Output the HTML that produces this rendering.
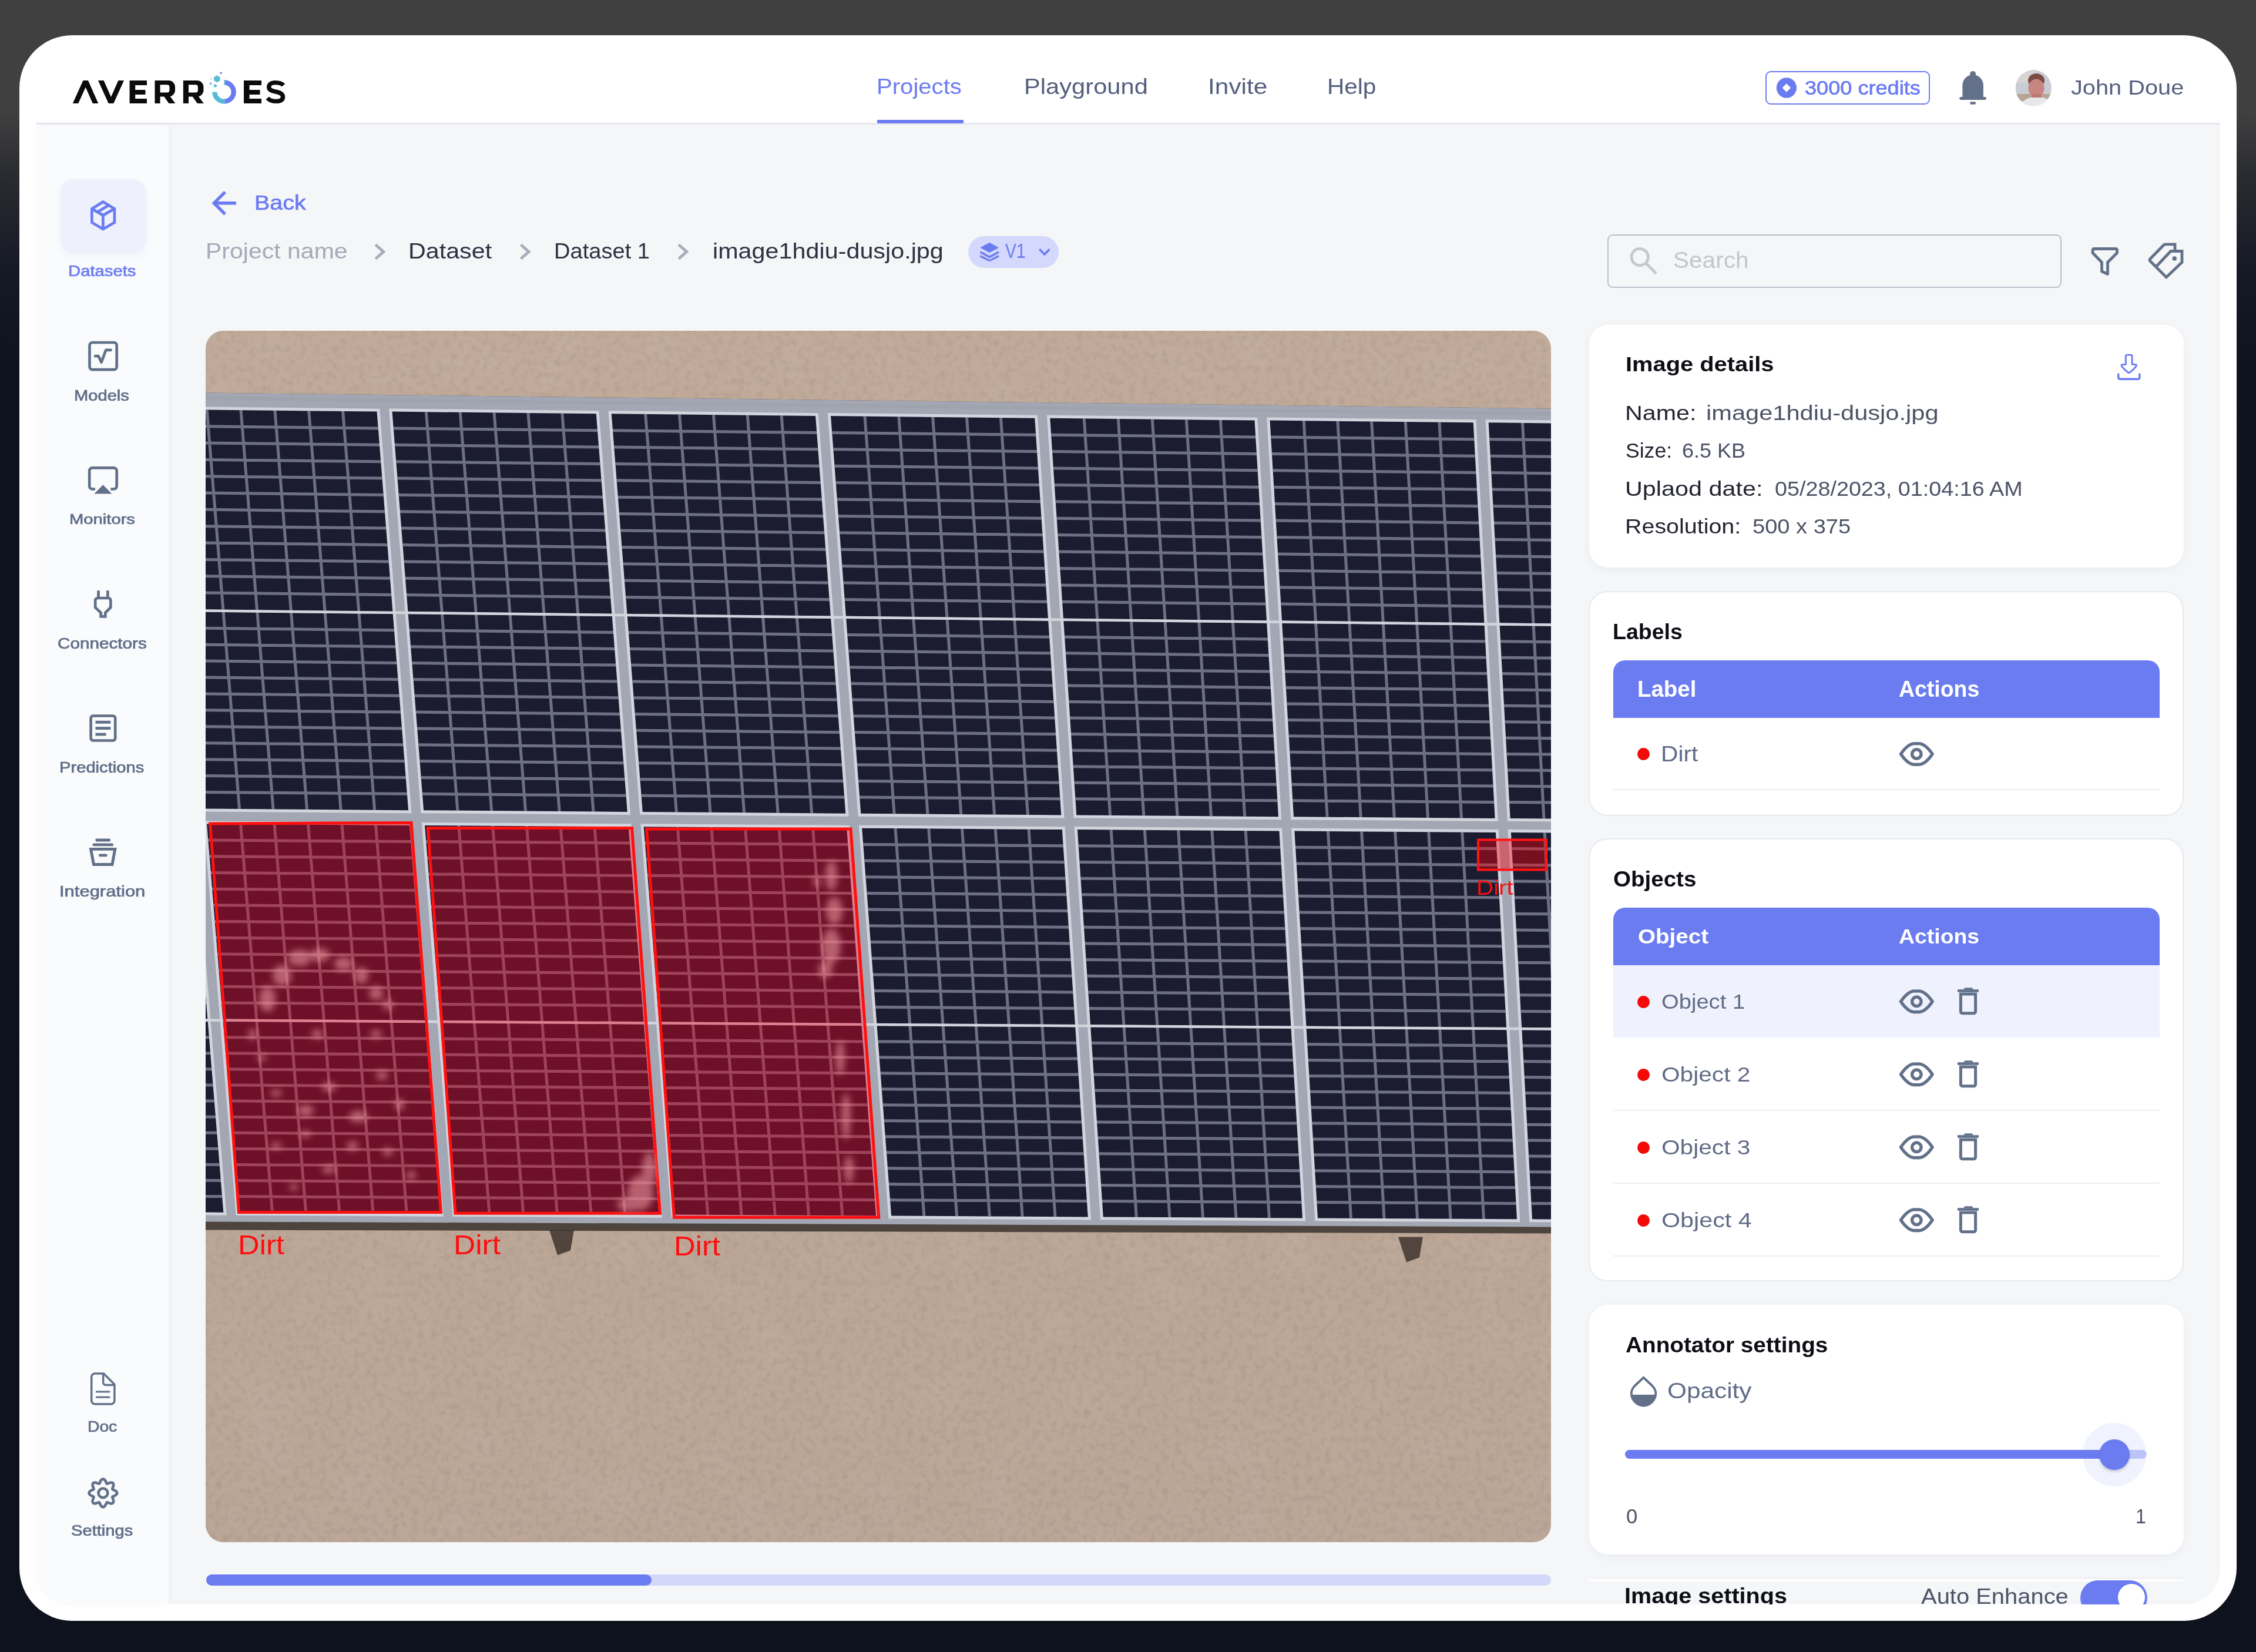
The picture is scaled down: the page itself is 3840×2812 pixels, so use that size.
<!DOCTYPE html><html><head><meta charset="utf-8"><style>
*{box-sizing:border-box;margin:0;padding:0}
html,body{width:3840px;height:2812px;overflow:hidden}
body{position:relative;font-family:"Liberation Sans",sans-serif;
background:linear-gradient(180deg,#404040 0px,#404040 190px,#2a2b30 300px,#151925 460px,#0f131e 620px,#0e121d 2812px)}
.a{position:absolute}
.t{position:absolute;white-space:nowrap;line-height:1;transform-origin:0 0}
svg{position:absolute;overflow:visible}
</style></head><body>

<div class="a" style="left:33px;top:60px;width:3774px;height:2699px;background:#fff;border-radius:90px"></div>
<div class="a" style="left:61px;top:209px;width:3718px;height:3px;background:#e6e8ed"></div>
<div class="a" style="left:61px;top:212px;width:3718px;height:2519px;background:#f5f6f8;border-radius:0 0 60px 60px"></div>
<div class="a" style="left:61px;top:212px;width:226px;height:2519px;background:#fafbfc;border-radius:0 0 0 60px;box-shadow:2px 0 8px rgba(30,40,80,0.04)"></div>
<svg style="left:0;top:0" width="3840" height="300" viewBox="0 0 3840 300">
<defs><linearGradient id="lg" x1="0" y1="0" x2="1" y2="0">
<stop offset="0" stop-color="#58bcd9"/><stop offset="0.48" stop-color="#5cb8dc"/><stop offset="0.62" stop-color="#6a80ee"/><stop offset="1" stop-color="#6c79f1"/></linearGradient></defs>
<g fill="#0b0b0e">
<polygon points="123.8,176 141.5,137 150,137 167.3,176 157.8,176 145.7,148.5 133.3,176"/>
<polygon points="167,137 176.6,137 189,165 201.4,137 211,137 193.3,176 184.7,176"/>
<path d="M220.6 137H250V145H230.2V153H247.5V161H230.2V168H250V176H220.6Z"/>
<path d="M263.5 137 H287 A11 11 0 0 1 298 148 V153.4 A11 11 0 0 1 287 164.4 H272.6 V176 H263.5 Z M272.6 144.2 V157.4 H284.5 A4 4 0 0 0 288.5 153.4 V148.2 A4 4 0 0 0 284.5 144.2 Z" fill-rule="evenodd"/>
<path d="M279 164 H289.5 L298.4 176 H287.5 Z"/>
<path d="M311.9 137 H335.4 A11 11 0 0 1 346.4 148 V153.4 A11 11 0 0 1 335.4 164.4 H321 V176 H311.9 Z M321 144.2 V157.4 H332.9 A4 4 0 0 0 336.9 153.4 V148.2 A4 4 0 0 0 332.9 144.2 Z" fill-rule="evenodd"/>
<path d="M327.4 164 H337.9 L346.8 176 H335.9 Z"/>
<path d="M415 137H445V145H424.6V153H442.5V161H424.6V168H445V176H415Z"/>
<path d="M482.3 145.2 C479.5 141.5 475 140.6 468.5 140.6 C461.5 140.6 457.7 143.6 457.7 148.3 C457.7 153.3 462.5 154.8 469.5 156.2 C477.5 157.7 481.5 160.2 481.5 165 C481.5 170 477 172.4 469.5 172.4 C463.5 172.4 458.5 170.5 455.3 166.8" fill="none" stroke="#0b0b0e" stroke-width="7.4"/>
</g>
<path d="M381.5 140.3 A16.2 16.2 0 1 1 365.3 156.5" fill="none" stroke="url(#lg)" stroke-width="8.2"/>
<polygon points="369.3,128.2 374.5,131.2 374.5,137.2 369.3,140.2 364.1,137.2 364.1,131.2" fill="#5bbcd8"/>
<circle cx="366.4" cy="146" r="2.6" fill="#5bbcd8"/>
<circle cx="358.6" cy="142.3" r="2" fill="#9aa6ee"/>
<circle cx="376.2" cy="124.2" r="1.7" fill="#6b7cf1"/>
<circle cx="359" cy="134.5" r="1.2" fill="#9ad6ea"/>
</svg>
<div class="t" style="left:1492.47px;top:130px;font-size:36.5px;color:#6b7cf1;font-weight:400;transform:scaleX(1.0987);">Projects</div>
<div class="t" style="left:1742.72px;top:130px;font-size:36.5px;color:#555f7e;font-weight:400;transform:scaleX(1.1423);">Playground</div>
<div class="t" style="left:2055.53px;top:130px;font-size:36.5px;color:#555f7e;font-weight:400;transform:scaleX(1.1624);">Invite</div>
<div class="t" style="left:2258.77px;top:130px;font-size:36.5px;color:#555f7e;font-weight:400;transform:scaleX(1.1112);">Help</div>
<div class="a" style="left:1493px;top:203.5px;width:147px;height:6px;background:#6b7cf1;border-radius:1px"></div>
<div class="a" style="left:3005px;top:120.5px;width:280px;height:57px;border:2.5px solid #6b7cf1;border-radius:9px"></div>
<svg style="left:0;top:0" width="10" height="10" viewBox="0 0 10 10">
<circle cx="3040.9" cy="149.5" r="17.2" fill="#6b7cf1"/>
<polygon points="3033.7,149.5 3040.9,142.3 3048.1,149.5 3040.9,156.7" fill="#fff"/>
</svg>
<div class="t" style="left:3072.31px;top:134px;font-size:32.5px;color:#6b7cf1;font-weight:400;transform:scaleX(1.1115);-webkit-text-stroke:0.7px #6b7cf1;">3000 credits</div>
<svg style="left:0;top:0" width="10" height="10">
<circle cx="3358.1" cy="126" r="5" fill="#627189"/>
<path d="M3340.4 165 V145 A17.75 17.75 0 0 1 3375.9 145 V165 Z" fill="#627189"/>
<rect x="3335.2" y="165" width="45.8" height="4.9" rx="2.45" fill="#627189"/>
<rect x="3353.1" y="173.2" width="10" height="4.6" rx="2.3" fill="#627189"/>
</svg>
<svg style="left:0;top:0" width="10" height="10">
<defs><clipPath id="av"><circle cx="3461.3" cy="149.9" r="30.6"/></clipPath></defs>
<g clip-path="url(#av)">
<rect x="3430" y="119" width="63" height="63" fill="#c8ccd3"/>
<rect x="3430" y="119" width="36" height="22" fill="#d9d4d3"/>
<rect x="3430" y="160" width="63" height="12" fill="#b7a493"/>
<ellipse cx="3466" cy="137" rx="14" ry="12" fill="#7b4c44"/>
<ellipse cx="3466" cy="150" rx="13.5" ry="15.5" fill="#c98580"/>
<path d="M3459 160 L3474 160 L3476 171 L3457 171Z" fill="#bd7772"/>
<path d="M3434 188 Q3440 170 3456 166 L3477 166 Q3494 170 3499 188Z" fill="#e8e7ed"/>
</g></svg>
<div class="t" style="left:3525.11px;top:132px;font-size:35.5px;color:#555f7e;font-weight:400;transform:scaleX(1.1196);">John Doue</div>
<div class="a" style="left:102.5px;top:304.5px;width:145px;height:126px;background:#eef0fd;border-radius:22px;box-shadow:0 6px 14px rgba(107,124,241,0.06)"></div>
<svg style="left:0;top:0" width="10" height="10"><g fill="none" stroke="#6b7cf1" stroke-width="4.7" stroke-linejoin="round" stroke-linecap="round">
<polygon points="175.4,343.5 194.9,355.4 194.9,378.7 175.4,390 156.4,378.7 156.4,355.4"/>
<polyline points="156.4,355.4 175.4,366.4 194.9,355.4"/>
<line x1="175.4" y1="366.4" x2="175.4" y2="390"/>
<line x1="165.8" y1="361" x2="185.2" y2="349.2"/>
</g></svg>
<div class="t" style="left:116.21px;top:449px;font-size:25.25px;color:#6b7cf1;font-weight:400;transform:scaleX(1.1589);-webkit-text-stroke:0.7px #6b7cf1;">Datasets</div>
<svg style="left:0;top:0" width="10" height="10"><g fill="none" stroke="#627189" stroke-width="4.7" stroke-linejoin="round" stroke-linecap="round">
<rect x="152.5" y="583" width="46.2" height="46.2" rx="5"/>
<polyline points="162,606.2 167.5,606.2 172.6,616.6 180.3,595.8 188.7,595.8"/>
</g></svg>
<div class="t" style="left:126.13px;top:661px;font-size:25.25px;color:#5f6d88;font-weight:400;transform:scaleX(1.1537);-webkit-text-stroke:0.7px #5f6d88;">Models</div>
<svg style="left:0;top:0" width="10" height="10">
<path d="M162 832.5 H157.2 A5 5 0 0 1 152.2 827.5 V801.4 A5 5 0 0 1 157.2 796.4 H193.7 A5 5 0 0 1 198.7 801.4 V827.5 A5 5 0 0 1 193.7 832.5 H188.3" fill="none" stroke="#627189" stroke-width="4.7"/>
<polygon points="160.3,840.5 175.4,825.3 190.4,840.5" fill="#627189"/>
</svg>
<div class="t" style="left:118.40px;top:872px;font-size:24.25px;color:#5f6d88;font-weight:400;transform:scaleX(1.2039);-webkit-text-stroke:0.7px #5f6d88;">Monitors</div>
<svg style="left:0;top:0" width="10" height="10">
<rect x="165.2" y="1005.2" width="4.7" height="12" fill="#627189"/>
<rect x="181" y="1005.2" width="4.7" height="12" fill="#627189"/>
<path d="M162.2 1034 V1022 A4 4 0 0 1 166.2 1018 H184.3 A4 4 0 0 1 188.3 1022 V1034 L179.3 1043 V1049.4 H171.7 V1043 Z" fill="none" stroke="#627189" stroke-width="4.7" stroke-linejoin="miter"/>
</svg>
<div class="t" style="left:97.90px;top:1083px;font-size:25.75px;color:#5f6d88;font-weight:400;transform:scaleX(1.1530);-webkit-text-stroke:0.7px #5f6d88;">Connectors</div>
<svg style="left:0;top:0" width="10" height="10"><g fill="none" stroke="#627189">
<rect x="154.6" y="1218.5" width="41.6" height="42" rx="4" stroke-width="4.7"/>
<line x1="162.5" y1="1229.3" x2="188.3" y2="1229.3" stroke-width="4.9"/>
<line x1="162.5" y1="1239.6" x2="188.3" y2="1239.6" stroke-width="4.9"/>
<line x1="162.5" y1="1250" x2="180.5" y2="1250" stroke-width="4.9"/>
</g></svg>
<div class="t" style="left:101.12px;top:1294px;font-size:25.75px;color:#5f6d88;font-weight:400;transform:scaleX(1.1328);-webkit-text-stroke:0.7px #5f6d88;">Predictions</div>
<svg style="left:0;top:0" width="10" height="10"><g fill="none" stroke="#627189" stroke-width="4.9" stroke-linecap="round">
<line x1="164.7" y1="1430" x2="185.8" y2="1430"/>
<line x1="159.9" y1="1437.9" x2="190.7" y2="1437.9"/>
<polygon points="154.6,1445.4 195.8,1445.4 191,1471.5 159.5,1471.5" stroke-linecap="butt" stroke-linejoin="miter"/>
<line x1="170.3" y1="1455.9" x2="180.3" y2="1455.9"/>
</g></svg>
<div class="t" style="left:101.34px;top:1505px;font-size:25.75px;color:#5f6d88;font-weight:400;transform:scaleX(1.2025);-webkit-text-stroke:0.7px #5f6d88;">Integration</div>
<svg style="left:0;top:0" width="10" height="10"><g fill="none" stroke="#627189" stroke-width="3.5" stroke-linejoin="round" stroke-linecap="round">
<path d="M176.5 2338.1 H161.7 A6 6 0 0 0 155.7 2344.1 V2384 A6 6 0 0 0 161.7 2390 H188.9 A6 6 0 0 0 194.9 2384 V2356.5 Z"/>
<path d="M175.6 2338.6 V2353 A4.5 4.5 0 0 0 180.1 2357.5 H194.5"/>
<line x1="164.3" y1="2369" x2="186" y2="2369" stroke-width="3"/>
<line x1="164.3" y1="2378.2" x2="186" y2="2378.2" stroke-width="3"/>
</g></svg>
<div class="t" style="left:148.98px;top:2416px;font-size:25.25px;color:#5f6d88;font-weight:400;transform:scaleX(1.1181);-webkit-text-stroke:0.7px #5f6d88;">Doc</div>
<svg style="left:0;top:0" width="10" height="10"><g fill="none" stroke="#627189" stroke-width="4.6">
<polygon points="175.40,2517.60 175.87,2517.64 176.33,2517.75 176.78,2517.93 177.23,2518.18 177.66,2518.50 178.07,2518.87 178.46,2519.30 178.83,2519.77 179.17,2520.28 179.50,2520.81 179.80,2521.37 180.07,2521.93 180.33,2522.50 180.58,2523.05 180.80,2523.58 181.03,2524.08 181.25,2524.54 181.47,2524.94 181.71,2525.28 181.98,2525.51 182.34,2525.54 182.74,2525.47 183.19,2525.35 183.67,2525.18 184.18,2524.98 184.72,2524.77 185.28,2524.55 185.86,2524.33 186.46,2524.13 187.06,2523.95 187.67,2523.80 188.27,2523.68 188.87,2523.61 189.45,2523.58 190.00,2523.61 190.53,2523.69 191.02,2523.83 191.47,2524.02 191.87,2524.27 192.23,2524.57 192.53,2524.93 192.78,2525.33 192.97,2525.78 193.11,2526.27 193.19,2526.80 193.22,2527.35 193.19,2527.93 193.12,2528.53 193.00,2529.13 192.85,2529.74 192.67,2530.34 192.47,2530.94 192.25,2531.52 192.03,2532.08 191.82,2532.62 191.62,2533.13 191.45,2533.61 191.33,2534.06 191.26,2534.46 191.29,2534.82 191.52,2535.09 191.86,2535.33 192.26,2535.55 192.72,2535.77 193.22,2536.00 193.75,2536.22 194.30,2536.47 194.87,2536.73 195.43,2537.00 195.99,2537.30 196.52,2537.63 197.03,2537.97 197.50,2538.34 197.93,2538.73 198.30,2539.14 198.62,2539.57 198.87,2540.02 199.05,2540.47 199.16,2540.93 199.20,2541.40 199.16,2541.87 199.05,2542.33 198.87,2542.78 198.62,2543.23 198.30,2543.66 197.93,2544.07 197.50,2544.46 197.03,2544.83 196.52,2545.17 195.99,2545.50 195.43,2545.80 194.87,2546.07 194.30,2546.33 193.75,2546.58 193.22,2546.80 192.72,2547.03 192.26,2547.25 191.86,2547.47 191.52,2547.71 191.29,2547.98 191.26,2548.34 191.33,2548.74 191.45,2549.19 191.62,2549.67 191.82,2550.18 192.03,2550.72 192.25,2551.28 192.47,2551.86 192.67,2552.46 192.85,2553.06 193.00,2553.67 193.12,2554.27 193.19,2554.87 193.22,2555.45 193.19,2556.00 193.11,2556.53 192.97,2557.02 192.78,2557.47 192.53,2557.87 192.23,2558.23 191.87,2558.53 191.47,2558.78 191.02,2558.97 190.53,2559.11 190.00,2559.19 189.45,2559.22 188.87,2559.19 188.27,2559.12 187.67,2559.00 187.06,2558.85 186.46,2558.67 185.86,2558.47 185.28,2558.25 184.72,2558.03 184.18,2557.82 183.67,2557.62 183.19,2557.45 182.74,2557.33 182.34,2557.26 181.98,2557.29 181.71,2557.52 181.47,2557.86 181.25,2558.26 181.03,2558.72 180.80,2559.22 180.58,2559.75 180.33,2560.30 180.07,2560.87 179.80,2561.43 179.50,2561.99 179.17,2562.52 178.83,2563.03 178.46,2563.50 178.07,2563.93 177.66,2564.30 177.23,2564.62 176.78,2564.87 176.33,2565.05 175.87,2565.16 175.40,2565.20 174.93,2565.16 174.47,2565.05 174.02,2564.87 173.57,2564.62 173.14,2564.30 172.73,2563.93 172.34,2563.50 171.97,2563.03 171.63,2562.52 171.30,2561.99 171.00,2561.43 170.73,2560.87 170.47,2560.30 170.22,2559.75 170.00,2559.22 169.77,2558.72 169.55,2558.26 169.33,2557.86 169.09,2557.52 168.82,2557.29 168.46,2557.26 168.06,2557.33 167.61,2557.45 167.13,2557.62 166.62,2557.82 166.08,2558.03 165.52,2558.25 164.94,2558.47 164.34,2558.67 163.74,2558.85 163.13,2559.00 162.53,2559.12 161.93,2559.19 161.35,2559.22 160.80,2559.19 160.27,2559.11 159.78,2558.97 159.33,2558.78 158.93,2558.53 158.57,2558.23 158.27,2557.87 158.02,2557.47 157.83,2557.02 157.69,2556.53 157.61,2556.00 157.58,2555.45 157.61,2554.87 157.68,2554.27 157.80,2553.67 157.95,2553.06 158.13,2552.46 158.33,2551.86 158.55,2551.28 158.77,2550.72 158.98,2550.18 159.18,2549.67 159.35,2549.19 159.47,2548.74 159.54,2548.34 159.51,2547.98 159.28,2547.71 158.94,2547.47 158.54,2547.25 158.08,2547.03 157.58,2546.80 157.05,2546.58 156.50,2546.33 155.93,2546.07 155.37,2545.80 154.81,2545.50 154.28,2545.17 153.77,2544.83 153.30,2544.46 152.87,2544.07 152.50,2543.66 152.18,2543.23 151.93,2542.78 151.75,2542.33 151.64,2541.87 151.60,2541.40 151.64,2540.93 151.75,2540.47 151.93,2540.02 152.18,2539.57 152.50,2539.14 152.87,2538.73 153.30,2538.34 153.77,2537.97 154.28,2537.63 154.81,2537.30 155.37,2537.00 155.93,2536.73 156.50,2536.47 157.05,2536.22 157.58,2536.00 158.08,2535.77 158.54,2535.55 158.94,2535.33 159.28,2535.09 159.51,2534.82 159.54,2534.46 159.47,2534.06 159.35,2533.61 159.18,2533.13 158.98,2532.62 158.77,2532.08 158.55,2531.52 158.33,2530.94 158.13,2530.34 157.95,2529.74 157.80,2529.13 157.68,2528.53 157.61,2527.93 157.58,2527.35 157.61,2526.80 157.69,2526.27 157.83,2525.78 158.02,2525.33 158.27,2524.93 158.57,2524.57 158.93,2524.27 159.33,2524.02 159.78,2523.83 160.27,2523.69 160.80,2523.61 161.35,2523.58 161.93,2523.61 162.53,2523.68 163.13,2523.80 163.74,2523.95 164.34,2524.13 164.94,2524.33 165.52,2524.55 166.08,2524.77 166.62,2524.98 167.13,2525.18 167.61,2525.35 168.06,2525.47 168.46,2525.54 168.82,2525.51 169.09,2525.28 169.33,2524.94 169.55,2524.54 169.77,2524.08 170.00,2523.58 170.22,2523.05 170.47,2522.50 170.73,2521.93 171.00,2521.37 171.30,2520.81 171.63,2520.28 171.97,2519.77 172.34,2519.30 172.73,2518.87 173.14,2518.50 173.57,2518.18 174.02,2517.93 174.47,2517.75 174.93,2517.64 175.40,2517.60" stroke-linejoin="round"/>
<circle cx="175.4" cy="2541.4" r="7.9"/>
</g></svg>
<div class="t" style="left:120.85px;top:2593px;font-size:25.0px;color:#5f6d88;font-weight:400;transform:scaleX(1.1660);-webkit-text-stroke:0.7px #5f6d88;">Settings</div>
<svg style="left:0;top:0" width="10" height="10"><g fill="none" stroke="#6b7cf1" stroke-width="5.4" stroke-linecap="butt" stroke-linejoin="miter">
<polyline points="383.2,326.8 364.3,345.7 383.2,364.6"/>
<line x1="364.3" y1="345.7" x2="402" y2="345.7"/>
</g></svg>
<div class="t" style="left:433.48px;top:328px;font-size:35.5px;color:#6b7cf1;font-weight:400;transform:scaleX(1.1111);-webkit-text-stroke:0.7px #6b7cf1;">Back</div>
<div class="t" style="left:349.50px;top:410px;font-size:36.25px;color:#a6a9b8;font-weight:400;transform:scaleX(1.1315);">Project name</div>
<svg style="left:0;top:0" width="10" height="10"><polyline points="639.2,416.5 652.7,428.5 639.2,440.5" fill="none" stroke="#a9acbb" stroke-width="5"/></svg>
<svg style="left:0;top:0" width="10" height="10"><polyline points="886.5,416.5 900,428.5 886.5,440.5" fill="none" stroke="#a9acbb" stroke-width="5"/></svg>
<svg style="left:0;top:0" width="10" height="10"><polyline points="1155.2,416.5 1168.7,428.5 1155.2,440.5" fill="none" stroke="#a9acbb" stroke-width="5"/></svg>
<div class="t" style="left:695.29px;top:410px;font-size:36.25px;color:#2e3142;font-weight:400;transform:scaleX(1.1377);">Dataset</div>
<div class="t" style="left:942.53px;top:410px;font-size:36.25px;color:#2e3142;font-weight:400;transform:scaleX(1.0504);">Dataset 1</div>
<div class="t" style="left:1213.23px;top:410px;font-size:36.25px;color:#2e3142;font-weight:400;transform:scaleX(1.1399);">image1hdiu-dusjo.jpg</div>
<div class="a" style="left:1648px;top:401.5px;width:154px;height:54px;background:#d3d8fc;border-radius:27px"></div>
<svg style="left:0;top:0" width="10" height="10"><g fill="#6b7cf1">
<path d="M1684.3 413 L1698.5 420.5 Q1700.5 421.5 1698.5 422.6 L1684.3 430 L1670 422.6 Q1668 421.5 1670 420.5 Z"/>
<path d="M1669.5 427.5 L1684.3 435.5 L1699 427.5 Q1700.5 428.3 1700.5 429.5 Q1700.5 430.7 1699 431.5 L1684.3 439.5 L1669.5 431.5 Q1668 430.7 1668 429.5 Q1668 428.3 1669.5 427.5Z"/>
<path d="M1669.5 434.3 L1684.3 442 L1699 434.3 Q1700.5 435 1700.5 436.3 Q1700.5 437.5 1699 438.3 L1686 444.5 Q1684.3 445.3 1682.6 444.5 L1669.5 438.3 Q1668 437.5 1668 436.3 Q1668 435 1669.5 434.3Z"/>
</g>
<polyline points="1769.4,424.3 1778,432.9 1786.3,424.3" fill="none" stroke="#6b7cf1" stroke-width="3.6"/>
</svg>
<div class="t" style="left:1711.00px;top:410px;font-size:34.5px;color:#6b7cf1;font-weight:400;transform:scaleX(0.8219);">V1</div>
<div class="a" style="left:2736px;top:398.5px;width:773px;height:91px;border:2.5px solid #b9bfc9;border-radius:9px"></div>
<svg style="left:0;top:0" width="10" height="10"><g fill="none" stroke="#c4c9cf" stroke-width="4.9">
<circle cx="2791.2" cy="437.6" r="14.2"/>
<line x1="2801.5" y1="448" x2="2819.1" y2="465.5"/>
</g></svg>
<div class="t" style="left:2848.38px;top:424px;font-size:38.0px;color:#c2c6cc;font-weight:400;transform:scaleX(1.0676);">Search</div>
<svg style="left:0;top:0" width="10" height="10"><g fill="none" stroke="#627189" stroke-width="4.8" stroke-linejoin="round">
<path d="M3564 423.5 H3601.5 A2 2 0 0 1 3603.5 425.5 V430.5 L3587.5 446.5 V466.5 L3577.5 462 V446.5 L3562 430.5 V425.5 A2 2 0 0 1 3564 423.5Z"/>
<path d="M3694.9 427.5 H3714 V446.5 L3687.3 472 L3660 444.5 Q3658 442.5 3660 440.5 L3683 417 Q3684 415.9 3686 415.9 H3702 V427.5" stroke-linejoin="miter"/>
<path d="M3669.7 454.1 L3694.9 427.5 H3700" stroke-linecap="round"/>
</g>
<circle cx="3701.2" cy="440.1" r="3.8" fill="#627189"/>
</svg>
<div class="a" style="left:2705px;top:552.5px;width:1011.5px;height:413px;background:#fff;border-radius:32px;box-shadow:0 4px 14px rgba(40,50,90,0.05)"></div>
<div class="t" style="left:2766.74px;top:602px;font-size:35.0px;color:#0d0e14;font-weight:700;transform:scaleX(1.1386);">Image details</div>
<svg style="left:0;top:0" width="10" height="10"><g fill="none" stroke="#6b7cf1" stroke-linejoin="round" stroke-linecap="round">
<path d="M3620.5 604.1 H3627 Q3629.1 604.1 3629.1 606.2 V620.4 H3634.5 Q3637.6 620.6 3636 623.3 Q3631 630 3625.5 633.8 Q3623.7 635 3622 633.8 Q3616.5 630 3611.5 623.3 Q3610 620.6 3613 620.4 H3618.3 V606.2 Q3618.3 604.1 3620.5 604.1Z" stroke-width="2.9"/>
<path d="M3605.7 637 V642 Q3605.7 645.3 3609 645.3 H3638.6 Q3641.9 645.3 3641.9 642 V637" stroke-width="3.5"/>
</g></svg>
<div class="t" style="left:2765.78px;top:686px;font-size:35.75px;color:#22242f;font-weight:400;transform:scaleX(1.1535);">Name:</div>
<div class="t" style="left:2904.09px;top:686px;font-size:35.75px;color:#4d5367;font-weight:400;transform:scaleX(1.1639);">image1hdiu-dusjo.jpg</div>
<div class="t" style="left:2767.03px;top:750px;font-size:35.75px;color:#22242f;font-weight:400;transform:scaleX(0.9948);">Size:</div>
<div class="t" style="left:2863.06px;top:750px;font-size:35.75px;color:#4d5367;font-weight:400;transform:scaleX(1.0050);">6.5 KB</div>
<div class="t" style="left:2765.77px;top:815px;font-size:35.75px;color:#22242f;font-weight:400;transform:scaleX(1.1561);">Uplaod date:</div>
<div class="t" style="left:3020.95px;top:815px;font-size:35.75px;color:#4d5367;font-weight:400;transform:scaleX(1.0554);">05/28/2023, 01:04:16 AM</div>
<div class="t" style="left:2765.91px;top:879px;font-size:35.75px;color:#22242f;font-weight:400;transform:scaleX(1.1027);">Resolution:</div>
<div class="t" style="left:2982.94px;top:879px;font-size:35.75px;color:#4d5367;font-weight:400;transform:scaleX(1.0645);">500 x 375</div>
<div class="a" style="left:2704px;top:1005.5px;width:1013px;height:383px;background:#fff;border:2px solid #e7e9ee;border-radius:32px"></div>
<div class="t" style="left:2745.00px;top:1057px;font-size:37.5px;color:#0d0e14;font-weight:700;transform:scaleX(0.9995);">Labels</div>
<div class="a" style="left:2746px;top:1124px;width:930px;height:97.5px;background:#6b7cf1;border-radius:20px 20px 0 0"></div>
<div class="t" style="left:2786.70px;top:1154px;font-size:38.25px;color:#ffffff;font-weight:700;transform:scaleX(1.0041);">Label</div>
<div class="t" style="left:3232.03px;top:1154px;font-size:38.25px;color:#ffffff;font-weight:700;transform:scaleX(0.9782);">Actions</div>
<div class="a" style="left:2786.5px;top:1273px;width:21px;height:21px;border-radius:50%;background:#f50a0a"></div>
<div class="t" style="left:2826.78px;top:1266px;font-size:36.25px;color:#606c86;font-weight:400;transform:scaleX(1.1230);">Dirt</div>
<svg style="left:0;top:0" width="10" height="10"><g fill="none" stroke="#627189" stroke-width="5.3">
<path d="M3235.4 1283.5 Q3249.3 1263.0 3262.3 1265.9 Q3275.3 1263.0 3289.2000000000003 1283.5 Q3275.3 1304.0 3262.3 1301.1 Q3249.3 1304.0 3235.4 1283.5Z" stroke-linejoin="round"/>
<circle cx="3262.3" cy="1283.5" r="7.8" stroke-width="5.4"/>
</g></svg>
<div class="a" style="left:2746px;top:1343px;width:930px;height:2px;background:#eceef2"></div>
<div class="a" style="left:2704px;top:1426.5px;width:1013px;height:754px;background:#fff;border:2px solid #e7e9ee;border-radius:32px"></div>
<div class="t" style="left:2745.97px;top:1478px;font-size:37.5px;color:#0d0e14;font-weight:700;transform:scaleX(1.0279);">Objects</div>
<div class="a" style="left:2746px;top:1545px;width:930px;height:97.6px;background:#6b7cf1;border-radius:20px 20px 0 0"></div>
<div class="t" style="left:2787.62px;top:1577px;font-size:35.75px;color:#ffffff;font-weight:700;transform:scaleX(1.0790);">Object</div>
<div class="t" style="left:3231.96px;top:1577px;font-size:35.75px;color:#ffffff;font-weight:700;transform:scaleX(1.0464);">Actions</div>
<div class="a" style="left:2746px;top:1642.6px;width:930px;height:123.4px;background:#eff1fd"></div>
<div class="a" style="left:2786.5px;top:1694.9px;width:21px;height:21px;border-radius:50%;background:#f50a0a"></div>
<div class="t" style="left:2828.12px;top:1688px;font-size:34.75px;color:#606c86;font-weight:400;transform:scaleX(1.0982);">Object 1</div>
<svg style="left:0;top:0" width="10" height="10"><g fill="none" stroke="#627189" stroke-width="5.3">
<path d="M3235.4 1704.8000000000002 Q3249.3 1684.3000000000002 3262.3 1687.2000000000003 Q3275.3 1684.3000000000002 3289.2000000000003 1704.8000000000002 Q3275.3 1725.3000000000002 3262.3 1722.4 Q3249.3 1725.3000000000002 3235.4 1704.8000000000002Z" stroke-linejoin="round"/>
<circle cx="3262.3" cy="1704.8000000000002" r="7.8" stroke-width="5.4"/>
</g></svg>
<svg style="left:0;top:0" width="10" height="10">
<rect x="3332" y="1684.2000000000003" width="35.9" height="4.6" fill="#627189"/>
<path d="M3342 1684.3000000000002 L3344.5 1681.3000000000002 H3356.5 L3359 1684.3000000000002Z" fill="#627189"/>
<path d="M3337.4 1692.0000000000002 V1721.8000000000002 A3 3 0 0 0 3340.4 1724.8000000000002 H3359.6 A3 3 0 0 0 3362.6 1721.8000000000002 V1692.0000000000002Z" fill="none" stroke="#627189" stroke-width="5"/>
</svg>
<div class="a" style="left:2786.5px;top:1818.9px;width:21px;height:21px;border-radius:50%;background:#f50a0a"></div>
<div class="t" style="left:2827.99px;top:1812px;font-size:34.75px;color:#606c86;font-weight:400;transform:scaleX(1.1695);">Object 2</div>
<svg style="left:0;top:0" width="10" height="10"><g fill="none" stroke="#627189" stroke-width="5.3">
<path d="M3235.4 1828.8000000000002 Q3249.3 1808.3000000000002 3262.3 1811.2000000000003 Q3275.3 1808.3000000000002 3289.2000000000003 1828.8000000000002 Q3275.3 1849.3000000000002 3262.3 1846.4 Q3249.3 1849.3000000000002 3235.4 1828.8000000000002Z" stroke-linejoin="round"/>
<circle cx="3262.3" cy="1828.8000000000002" r="7.8" stroke-width="5.4"/>
</g></svg>
<svg style="left:0;top:0" width="10" height="10">
<rect x="3332" y="1808.2000000000003" width="35.9" height="4.6" fill="#627189"/>
<path d="M3342 1808.3000000000002 L3344.5 1805.3000000000002 H3356.5 L3359 1808.3000000000002Z" fill="#627189"/>
<path d="M3337.4 1816.0000000000002 V1845.8000000000002 A3 3 0 0 0 3340.4 1848.8000000000002 H3359.6 A3 3 0 0 0 3362.6 1845.8000000000002 V1816.0000000000002Z" fill="none" stroke="#627189" stroke-width="5"/>
</svg>
<div class="a" style="left:2746px;top:1889.0px;width:930px;height:2px;background:#eceef2"></div>
<div class="a" style="left:2786.5px;top:1942.9px;width:21px;height:21px;border-radius:50%;background:#f50a0a"></div>
<div class="t" style="left:2827.99px;top:1936px;font-size:34.75px;color:#606c86;font-weight:400;transform:scaleX(1.1695);">Object 3</div>
<svg style="left:0;top:0" width="10" height="10"><g fill="none" stroke="#627189" stroke-width="5.3">
<path d="M3235.4 1952.8000000000002 Q3249.3 1932.3000000000002 3262.3 1935.2000000000003 Q3275.3 1932.3000000000002 3289.2000000000003 1952.8000000000002 Q3275.3 1973.3000000000002 3262.3 1970.4 Q3249.3 1973.3000000000002 3235.4 1952.8000000000002Z" stroke-linejoin="round"/>
<circle cx="3262.3" cy="1952.8000000000002" r="7.8" stroke-width="5.4"/>
</g></svg>
<svg style="left:0;top:0" width="10" height="10">
<rect x="3332" y="1932.2000000000003" width="35.9" height="4.6" fill="#627189"/>
<path d="M3342 1932.3000000000002 L3344.5 1929.3000000000002 H3356.5 L3359 1932.3000000000002Z" fill="#627189"/>
<path d="M3337.4 1940.0000000000002 V1969.8000000000002 A3 3 0 0 0 3340.4 1972.8000000000002 H3359.6 A3 3 0 0 0 3362.6 1969.8000000000002 V1940.0000000000002Z" fill="none" stroke="#627189" stroke-width="5"/>
</svg>
<div class="a" style="left:2746px;top:2013.0px;width:930px;height:2px;background:#eceef2"></div>
<div class="a" style="left:2786.5px;top:2066.9px;width:21px;height:21px;border-radius:50%;background:#f50a0a"></div>
<div class="t" style="left:2827.96px;top:2060px;font-size:34.75px;color:#606c86;font-weight:400;transform:scaleX(1.1873);">Object 4</div>
<svg style="left:0;top:0" width="10" height="10"><g fill="none" stroke="#627189" stroke-width="5.3">
<path d="M3235.4 2076.8 Q3249.3 2056.3 3262.3 2059.2000000000003 Q3275.3 2056.3 3289.2000000000003 2076.8 Q3275.3 2097.3 3262.3 2094.4 Q3249.3 2097.3 3235.4 2076.8Z" stroke-linejoin="round"/>
<circle cx="3262.3" cy="2076.8" r="7.8" stroke-width="5.4"/>
</g></svg>
<svg style="left:0;top:0" width="10" height="10">
<rect x="3332" y="2056.2000000000003" width="35.9" height="4.6" fill="#627189"/>
<path d="M3342 2056.3 L3344.5 2053.3 H3356.5 L3359 2056.3Z" fill="#627189"/>
<path d="M3337.4 2064.0 V2093.8 A3 3 0 0 0 3340.4 2096.8 H3359.6 A3 3 0 0 0 3362.6 2093.8 V2064.0Z" fill="none" stroke="#627189" stroke-width="5"/>
</svg>
<div class="a" style="left:2746px;top:2137.0px;width:930px;height:2px;background:#eceef2"></div>
<div class="a" style="left:2705px;top:2221px;width:1011.5px;height:425px;background:#fff;border-radius:32px;box-shadow:0 4px 14px rgba(40,50,90,0.05)"></div>
<div class="t" style="left:2766.54px;top:2272px;font-size:36.5px;color:#0d0e14;font-weight:700;transform:scaleX(1.0614);">Annotator settings</div>
<svg style="left:0;top:0" width="10" height="10">
<path d="M2797.5 2344.9 L2812 2358.5 Q2818.3 2365 2818.3 2371.5 A20.7 20.7 0 0 1 2776.8 2371.5 Q2776.8 2365 2783 2358.5 Z" fill="none" stroke="#627189" stroke-width="3.9" stroke-linejoin="miter"/>
<path d="M2777 2374 H2818.2 A20.6 20.6 0 0 1 2777 2374Z" fill="#627189"/>
</svg>
<div class="t" style="left:2837.78px;top:2350px;font-size:36.5px;color:#606c86;font-weight:400;transform:scaleX(1.1598);">Opacity</div>
<div class="a" style="left:2766px;top:2467.5px;width:888px;height:15.5px;background:#c5cbf9;border-radius:8px"></div>
<div class="a" style="left:2766px;top:2467.5px;width:836px;height:15.5px;background:#6b7cf1;border-radius:8px 0 0 8px"></div>
<div class="a" style="left:3545px;top:2422px;width:108px;height:108px;border-radius:50%;background:rgba(107,124,241,0.10)"></div>
<div class="a" style="left:3573.2px;top:2450px;width:51.6px;height:51.6px;border-radius:50%;background:#6b7cf1;box-shadow:0 3px 4px rgba(0,0,0,0.18)"></div>
<div class="t" style="left:2767.64px;top:2564px;font-size:35.75px;color:#4d5367;font-weight:400;transform:scaleX(0.9664);">0</div>
<div class="t" style="left:3635.34px;top:2564px;font-size:35.75px;color:#4d5367;font-weight:400;transform:scaleX(0.8959);">1</div>
<div class="a" style="left:2705px;top:2688px;width:1011px;height:3.5px;background:#ffffff;box-shadow:0 -2px 5px rgba(30,40,80,0.04)"></div>
<div class="a" style="left:2690px;top:2690px;width:1050px;height:41px;overflow:hidden">
<div class="t" style="left:75.43px;top:9px;font-size:36.25px;color:#0d0e14;font-weight:700;transform:scaleX(1.0908);">Image settings</div>
<div class="t" style="left:579.80px;top:10px;font-size:36.25px;color:#4d5367;font-weight:400;transform:scaleX(1.1012);">Auto Enhance</div>
<div class="a" style="left:850.5999999999999px;top:0px;width:114.4px;height:60px;border-radius:30px;background:#6b7cf1"></div>
<div class="a" style="left:914.5px;top:6px;width:46px;height:46px;border-radius:50%;background:#fff"></div>
</div>
<div class="a" style="left:350px;top:562.5px;width:2290px;height:2062.5px;border-radius:30px;overflow:hidden"><svg style="left:0;top:0" width="2290" height="2062.5" viewBox="350 562.5 2290 2062.5">
<defs>
<filter id="sand" x="0" y="0" width="100%" height="100%">
<feTurbulence type="fractalNoise" baseFrequency="0.09" numOctaves="2" seed="3" result="n"/>
<feColorMatrix in="n" type="matrix" values="0 0 0 0 0  0 0 0 0 0  0 0 0 0 0  0 0 0 -1.1 0.62" result="a"/>
<feComposite in="a" in2="SourceGraphic" operator="in"/>
</filter>
<filter id="sand2" x="0" y="0" width="100%" height="100%">
<feTurbulence type="fractalNoise" baseFrequency="0.012" numOctaves="2" seed="9" result="n"/>
<feColorMatrix in="n" type="matrix" values="0 0 0 0 1  0 0 0 0 1  0 0 0 0 1  0 0 0 -1.2 0.65" result="a"/>
<feComposite in="a" in2="SourceGraphic" operator="in"/>
</filter>
</defs>
<linearGradient id="sg" x1="0" y1="0" x2="0" y2="1"><stop offset="0" stop-color="#c1aa99"/><stop offset="0.55" stop-color="#bda796"/><stop offset="1" stop-color="#bba698"/></linearGradient>
<rect x="350" y="562.5" width="2290" height="2062.5" fill="url(#sg)"/>
<rect x="350" y="562.5" width="2290" height="2062.5" fill="#6e5a4c" filter="url(#sand)" opacity="0.12"/>
<rect x="350" y="562.5" width="2290" height="2062.5" fill="#fff" filter="url(#sand2)" opacity="0.08"/>
<polygon points="350.0,668.0 2640.0,695.0 2640.0,2099.0 350.0,2093.0" fill="#4d443d"/>
<polygon points="350.0,668.0 2640.0,695.0 2640.0,2088.0 350.0,2079.0" fill="#a2a7b3"/>
<polygon points="350.0,674.0 2640.0,701.0 2640.0,707.0 350.0,680.0" fill="#9ea3ad"/>
<polygon points="-79.1,692.6 268.2,696.3 324.0,1375.9 -20.3,1373.2" fill="none" stroke="#d3d5de" stroke-width="10" stroke-linejoin="miter"/>
<polygon points="294.2,696.3 641.5,700.1 695.1,1378.7 350.0,1375.9" fill="none" stroke="#d3d5de" stroke-width="10" stroke-linejoin="miter"/>
<polygon points="667.5,700.1 1014.8,703.8 1067.8,1381.4 721.1,1378.7" fill="none" stroke="#d3d5de" stroke-width="10" stroke-linejoin="miter"/>
<polygon points="1040.8,703.8 1388.1,707.6 1439.3,1384.2 1093.8,1381.4" fill="none" stroke="#d3d5de" stroke-width="10" stroke-linejoin="miter"/>
<polygon points="1414.1,707.6 1761.3,711.3 1806.3,1386.9 1465.3,1384.2" fill="none" stroke="#d3d5de" stroke-width="10" stroke-linejoin="miter"/>
<polygon points="1787.3,711.3 2135.5,715.1 2176.0,1389.7 1832.3,1386.9" fill="none" stroke="#d3d5de" stroke-width="10" stroke-linejoin="miter"/>
<polygon points="2161.5,715.1 2507.7,718.8 2544.6,1392.4 2202.0,1389.7" fill="none" stroke="#d3d5de" stroke-width="10" stroke-linejoin="miter"/>
<polygon points="2533.7,718.8 2880.6,722.5 2914.5,1395.1 2570.6,1392.4" fill="none" stroke="#d3d5de" stroke-width="10" stroke-linejoin="miter"/>
<polygon points="-18.0,1399.5 326.1,1401.9 380.3,2063.2 39.1,2061.3" fill="none" stroke="#d3d5de" stroke-width="10" stroke-linejoin="miter"/>
<polygon points="352.1,1401.9 697.1,1404.4 749.3,2065.2 406.3,2063.2" fill="none" stroke="#d3d5de" stroke-width="10" stroke-linejoin="miter"/>
<polygon points="723.1,1404.4 1069.8,1406.8 1121.5,2067.1 775.3,2065.2" fill="none" stroke="#d3d5de" stroke-width="10" stroke-linejoin="miter"/>
<polygon points="1095.8,1406.8 1441.2,1409.2 1491.1,2069.0 1147.5,2067.1" fill="none" stroke="#d3d5de" stroke-width="10" stroke-linejoin="miter"/>
<polygon points="1467.2,1409.2 1807.9,1411.6 1851.8,2070.9 1517.1,2069.0" fill="none" stroke="#d3d5de" stroke-width="10" stroke-linejoin="miter"/>
<polygon points="1833.9,1411.6 2177.4,1414.1 2217.0,2072.9 1877.8,2070.9" fill="none" stroke="#d3d5de" stroke-width="10" stroke-linejoin="miter"/>
<polygon points="2203.4,1414.1 2545.9,1416.5 2582.0,2074.8 2243.0,2072.9" fill="none" stroke="#d3d5de" stroke-width="10" stroke-linejoin="miter"/>
<polygon points="2571.9,1416.5 2915.7,1418.9 2948.8,2076.7 2608.0,2074.8" fill="none" stroke="#d3d5de" stroke-width="10" stroke-linejoin="miter"/>
<polygon points="-79.1,692.6 268.2,696.3 296.1,1036.6 -49.7,1032.7" fill="#1c1c31"/>
<path d="M-21.2 693.2L7.9 1033.3M36.7 693.8L65.6 1034.0M94.6 694.4L123.2 1034.6M152.5 695.1L180.8 1035.3M210.3 695.7L238.5 1035.9M-76.6 720.9L270.5 724.7M-74.2 749.2L272.9 753.0M-71.7 777.6L275.2 781.4M-69.3 805.9L277.5 809.7M-66.8 834.3L279.8 838.1M-64.4 862.6L282.2 866.4M-62.0 891.0L284.5 894.8M-59.5 919.3L286.8 923.2M-57.1 947.6L289.1 951.5M-54.6 976.0L291.5 979.9M-52.2 1004.3L293.8 1008.2" stroke="rgba(160,164,184,0.62)" stroke-width="5" fill="none"/>
<polygon points="294.2,696.3 641.5,700.1 668.4,1040.5 322.1,1036.6" fill="#1c1c31"/>
<path d="M352.1 696.9L379.8 1037.2M410.0 697.6L437.5 1037.9M467.9 698.2L495.3 1038.5M525.7 698.8L553.0 1039.2M583.6 699.4L610.7 1039.8M296.5 724.7L643.7 728.4M298.9 753.0L646.0 756.8M301.2 781.4L648.2 785.2M303.5 809.7L650.5 813.5M305.8 838.1L652.7 841.9M308.2 866.4L654.9 870.3M310.5 894.8L657.2 898.6M312.8 923.2L659.4 927.0M315.1 951.5L661.7 955.4M317.5 979.9L663.9 983.7M319.8 1008.2L666.1 1012.1" stroke="rgba(160,164,184,0.62)" stroke-width="5" fill="none"/>
<polygon points="667.5,700.1 1014.8,703.8 1041.4,1044.4 694.4,1040.5" fill="#1c1c31"/>
<path d="M725.4 700.7L752.2 1041.1M783.3 701.3L810.1 1041.8M841.1 701.9L867.9 1042.4M899.0 702.6L925.8 1043.1M956.9 703.2L983.6 1043.7M669.7 728.4L1017.0 732.2M672.0 756.8L1019.2 760.6M674.2 785.2L1021.4 789.0M676.5 813.5L1023.7 817.3M678.7 841.9L1025.9 845.7M680.9 870.3L1028.1 874.1M683.2 898.6L1030.3 902.5M685.4 927.0L1032.6 930.9M687.7 955.4L1034.8 959.2M689.9 983.7L1037.0 987.6M692.1 1012.1L1039.2 1016.0" stroke="rgba(160,164,184,0.62)" stroke-width="5" fill="none"/>
<polygon points="1040.8,703.8 1388.1,707.6 1413.9,1048.3 1067.4,1044.4" fill="#1c1c31"/>
<path d="M1098.7 704.4L1125.2 1045.0M1156.6 705.1L1182.9 1045.7M1214.5 705.7L1240.7 1046.3M1272.3 706.3L1298.4 1047.0M1330.2 706.9L1356.1 1047.6M1043.0 732.2L1390.3 736.0M1045.2 760.6L1392.4 764.3M1047.4 789.0L1394.6 792.7M1049.7 817.3L1396.7 821.1M1051.9 845.7L1398.9 849.5M1054.1 874.1L1401.0 877.9M1056.3 902.5L1403.2 906.3M1058.6 930.9L1405.3 934.7M1060.8 959.2L1407.4 963.1M1063.0 987.6L1409.6 991.5M1065.2 1016.0L1411.7 1019.9" stroke="rgba(160,164,184,0.62)" stroke-width="5" fill="none"/>
<polygon points="1414.1,707.6 1761.3,711.3 1784.0,1052.2 1439.9,1048.3" fill="#1c1c31"/>
<path d="M1472.0 708.2L1497.2 1048.9M1529.9 708.8L1554.6 1049.6M1587.7 709.4L1611.9 1050.2M1645.6 710.1L1669.3 1050.9M1703.5 710.7L1726.6 1051.5M1416.3 736.0L1763.2 739.7M1418.4 764.3L1765.1 768.1M1420.6 792.7L1767.0 796.5M1422.7 821.1L1768.9 824.9M1424.9 849.5L1770.8 853.3M1427.0 877.9L1772.7 881.7M1429.2 906.3L1774.5 910.1M1431.3 934.7L1776.4 938.5M1433.4 963.1L1778.3 967.0M1435.6 991.5L1780.2 995.4M1437.7 1019.9L1782.1 1023.8" stroke="rgba(160,164,184,0.62)" stroke-width="5" fill="none"/>
<polygon points="1787.3,711.3 2135.5,715.1 2156.0,1056.1 1810.0,1052.2" fill="#1c1c31"/>
<path d="M1845.3 711.9L1867.7 1052.8M1903.4 712.6L1925.3 1053.5M1961.4 713.2L1983.0 1054.1M2019.4 713.8L2040.6 1054.8M2077.5 714.4L2098.3 1055.4M1789.2 739.7L2137.2 743.5M1791.1 768.1L2138.9 771.9M1793.0 796.5L2140.6 800.3M1794.9 824.9L2142.3 828.7M1796.8 853.3L2144.0 857.1M1798.7 881.7L2145.7 885.6M1800.5 910.1L2147.4 914.0M1802.4 938.5L2149.1 942.4M1804.3 967.0L2150.8 970.8M1806.2 995.4L2152.6 999.2M1808.1 1023.8L2154.3 1027.6" stroke="rgba(160,164,184,0.62)" stroke-width="5" fill="none"/>
<polygon points="2161.5,715.1 2507.7,718.8 2526.4,1059.9 2182.0,1056.1" fill="#1c1c31"/>
<path d="M2219.2 715.7L2239.4 1056.7M2276.9 716.3L2296.8 1057.4M2334.6 716.9L2354.2 1058.0M2392.3 717.6L2411.6 1058.7M2450.0 718.2L2469.0 1059.3M2163.2 743.5L2509.2 747.2M2164.9 771.9L2510.8 775.7M2166.6 800.3L2512.4 804.1M2168.3 828.7L2513.9 832.5M2170.0 857.1L2515.5 860.9M2171.7 885.6L2517.0 889.4M2173.4 914.0L2518.6 917.8M2175.1 942.4L2520.1 946.2M2176.8 970.8L2521.7 974.7M2178.6 999.2L2523.3 1003.1M2180.3 1027.6L2524.8 1031.5" stroke="rgba(160,164,184,0.62)" stroke-width="5" fill="none"/>
<polygon points="2533.7,718.8 2880.6,722.5 2897.8,1063.8 2552.4,1059.9" fill="#1c1c31"/>
<path d="M2591.5 719.4L2610.0 1060.6M2649.3 720.1L2667.5 1061.2M2707.2 720.7L2725.1 1061.9M2765.0 721.3L2782.7 1062.5M2822.8 721.9L2840.3 1063.2M2535.2 747.2L2882.1 751.0M2536.8 775.7L2883.5 779.4M2538.4 804.1L2884.9 807.9M2539.9 832.5L2886.4 836.3M2541.5 860.9L2887.8 864.8M2543.0 889.4L2889.2 893.2M2544.6 917.8L2890.7 921.6M2546.1 946.2L2892.1 950.1M2547.7 974.7L2893.5 978.5M2549.3 1003.1L2895.0 1007.0M2550.8 1031.5L2896.4 1035.4" stroke="rgba(160,164,184,0.62)" stroke-width="5" fill="none"/>
<polygon points="-49.4,1036.7 296.5,1040.6 324.0,1375.9 -20.3,1373.2" fill="#1c1c31"/>
<path d="M8.3 1037.3L37.1 1373.6M65.9 1038.0L94.4 1374.1M123.5 1038.6L151.8 1374.5M181.2 1039.3L209.2 1375.0M238.8 1039.9L266.6 1375.4M-47.0 1064.7L298.7 1068.5M-44.5 1092.8L301.0 1096.5M-42.1 1120.8L303.3 1124.4M-39.7 1148.8L305.6 1152.4M-37.3 1176.9L307.9 1180.3M-34.8 1204.9L310.2 1208.2M-32.4 1233.0L312.5 1236.2M-30.0 1261.0L314.8 1264.1M-27.6 1289.0L317.1 1292.1M-25.2 1317.1L319.4 1320.0M-22.7 1345.1L321.7 1348.0" stroke="rgba(160,164,184,0.62)" stroke-width="5" fill="none"/>
<polygon points="322.5,1040.6 668.7,1044.5 695.1,1378.7 350.0,1375.9" fill="#1c1c31"/>
<path d="M380.2 1041.2L407.5 1376.4M437.9 1041.9L465.0 1376.8M495.6 1042.5L522.5 1377.3M553.3 1043.2L580.1 1377.7M611.0 1043.8L637.6 1378.2M324.7 1068.5L670.9 1072.3M327.0 1096.5L673.1 1100.2M329.3 1124.4L675.3 1128.0M331.6 1152.4L677.5 1155.9M333.9 1180.3L679.7 1183.7M336.2 1208.2L681.9 1211.6M338.5 1236.2L684.1 1239.4M340.8 1264.1L686.3 1267.3M343.1 1292.1L688.5 1295.1M345.4 1320.0L690.7 1323.0M347.7 1348.0L692.9 1350.8" stroke="rgba(160,164,184,0.62)" stroke-width="5" fill="none"/>
<polygon points="694.7,1044.5 1041.8,1048.4 1067.8,1381.4 721.1,1378.7" fill="#1c1c31"/>
<path d="M752.5 1045.1L778.9 1379.1M810.4 1045.8L836.7 1379.6M868.2 1046.4L894.5 1380.0M926.1 1047.1L952.2 1380.5M983.9 1047.7L1010.0 1381.0M696.9 1072.3L1043.9 1076.1M699.1 1100.2L1046.1 1103.9M701.3 1128.0L1048.3 1131.6M703.5 1155.9L1050.4 1159.4M705.7 1183.7L1052.6 1187.2M707.9 1211.6L1054.8 1214.9M710.1 1239.4L1057.0 1242.7M712.3 1267.3L1059.1 1270.4M714.5 1295.1L1061.3 1298.2M716.7 1323.0L1063.5 1325.9M718.9 1350.8L1065.6 1353.7" stroke="rgba(160,164,184,0.62)" stroke-width="5" fill="none"/>
<polygon points="1067.8,1048.4 1414.2,1052.3 1439.3,1384.2 1093.8,1381.4" fill="#1c1c31"/>
<path d="M1125.5 1049.0L1151.4 1381.9M1183.2 1049.7L1209.0 1382.3M1241.0 1050.3L1266.6 1382.8M1298.7 1051.0L1324.1 1383.3M1356.5 1051.6L1381.7 1383.7M1069.9 1076.1L1416.3 1079.9M1072.1 1103.9L1418.4 1107.6M1074.3 1131.6L1420.5 1135.3M1076.4 1159.4L1422.6 1162.9M1078.6 1187.2L1424.6 1190.6M1080.8 1214.9L1426.7 1218.2M1083.0 1242.7L1428.8 1245.9M1085.1 1270.4L1430.9 1273.6M1087.3 1298.2L1433.0 1301.2M1089.5 1325.9L1435.1 1328.9M1091.6 1353.7L1437.2 1356.5" stroke="rgba(160,164,184,0.62)" stroke-width="5" fill="none"/>
<polygon points="1440.2,1052.3 1784.3,1056.2 1806.3,1386.9 1465.3,1384.2" fill="#1c1c31"/>
<path d="M1497.5 1052.9L1522.1 1384.6M1554.9 1053.6L1579.0 1385.1M1612.2 1054.2L1635.8 1385.5M1669.6 1054.9L1692.6 1386.0M1726.9 1055.5L1749.4 1386.5M1442.3 1079.9L1786.1 1083.7M1444.4 1107.6L1787.9 1111.3M1446.5 1135.3L1789.8 1138.9M1448.6 1162.9L1791.6 1166.4M1450.6 1190.6L1793.4 1194.0M1452.7 1218.2L1795.3 1221.5M1454.8 1245.9L1797.1 1249.1M1456.9 1273.6L1798.9 1276.7M1459.0 1301.2L1800.8 1304.2M1461.1 1328.9L1802.6 1331.8M1463.2 1356.5L1804.4 1359.3" stroke="rgba(160,164,184,0.62)" stroke-width="5" fill="none"/>
<polygon points="1810.3,1056.2 2156.2,1060.1 2176.0,1389.7 1832.3,1386.9" fill="#1c1c31"/>
<path d="M1867.9 1056.8L1889.6 1387.4M1925.6 1057.5L1946.8 1387.8M1983.2 1058.1L2004.1 1388.3M2040.9 1058.8L2061.4 1388.7M2098.5 1059.4L2118.7 1389.2M1812.1 1083.7L2157.9 1087.5M1813.9 1111.3L2159.5 1115.0M1815.8 1138.9L2161.1 1142.5M1817.6 1166.4L2162.8 1169.9M1819.4 1194.0L2164.4 1197.4M1821.3 1221.5L2166.1 1224.9M1823.1 1249.1L2167.7 1252.3M1824.9 1276.7L2169.4 1279.8M1826.8 1304.2L2171.0 1307.3M1828.6 1331.8L2172.7 1334.7M1830.4 1359.3L2174.3 1362.2" stroke="rgba(160,164,184,0.62)" stroke-width="5" fill="none"/>
<polygon points="2182.2,1060.1 2526.6,1063.9 2544.6,1392.4 2202.0,1389.7" fill="#1c1c31"/>
<path d="M2239.6 1060.7L2259.1 1390.1M2297.0 1061.4L2316.2 1390.6M2354.4 1062.0L2373.3 1391.0M2411.8 1062.7L2430.4 1391.5M2469.2 1063.3L2487.5 1391.9M2183.9 1087.5L2528.1 1091.3M2185.5 1115.0L2529.6 1118.7M2187.1 1142.5L2531.1 1146.1M2188.8 1169.9L2532.6 1173.4M2190.4 1197.4L2534.1 1200.8M2192.1 1224.9L2535.6 1228.2M2193.7 1252.3L2537.1 1255.5M2195.4 1279.8L2538.6 1282.9M2197.0 1307.3L2540.1 1310.3M2198.7 1334.7L2541.6 1337.6M2200.3 1362.2L2543.1 1365.0" stroke="rgba(160,164,184,0.62)" stroke-width="5" fill="none"/>
<polygon points="2552.6,1063.9 2898.0,1067.8 2914.5,1395.1 2570.6,1392.4" fill="#1c1c31"/>
<path d="M2610.2 1064.6L2627.9 1392.8M2667.7 1065.2L2685.2 1393.3M2725.3 1065.9L2742.6 1393.8M2782.9 1066.5L2799.9 1394.2M2840.5 1067.2L2857.2 1394.7M2554.1 1091.3L2899.4 1095.1M2555.6 1118.7L2900.8 1122.4M2557.1 1146.1L2902.1 1149.7M2558.6 1173.4L2903.5 1176.9M2560.1 1200.8L2904.9 1204.2M2561.6 1228.2L2906.3 1231.5M2563.1 1255.5L2907.6 1258.8M2564.6 1282.9L2909.0 1286.0M2566.1 1310.3L2910.4 1313.3M2567.6 1337.6L2911.8 1340.6M2569.1 1365.0L2913.1 1367.9" stroke="rgba(160,164,184,0.62)" stroke-width="5" fill="none"/>
<polygon points="-18.0,1399.5 326.1,1401.9 353.3,1734.1 10.6,1731.7" fill="#1c1c31"/>
<path d="M39.3 1399.9L67.7 1732.1M96.7 1400.3L124.9 1732.5M154.0 1400.7L182.0 1732.9M211.4 1401.1L239.1 1733.3M268.7 1401.5L296.2 1733.7M-15.7 1427.2L328.4 1429.6M-13.3 1454.9L330.6 1457.3M-10.9 1482.6L332.9 1485.0M-8.5 1510.2L335.2 1512.7M-6.1 1537.9L337.4 1540.3M-3.7 1565.6L339.7 1568.0M-1.3 1593.3L342.0 1595.7M1.1 1621.0L344.3 1623.4M3.5 1648.6L346.5 1651.1M5.9 1676.3L348.8 1678.7M8.2 1704.0L351.1 1706.4" stroke="rgba(160,164,184,0.62)" stroke-width="5" fill="none"/>
<polygon points="352.1,1401.9 697.1,1404.4 723.4,1736.5 379.3,1734.1" fill="#1c1c31"/>
<path d="M409.6 1402.3L436.7 1734.5M467.1 1402.7L494.0 1734.9M524.6 1403.1L551.4 1735.3M582.1 1403.5L608.7 1735.7M639.6 1404.0L666.0 1736.1M354.4 1429.6L699.3 1432.0M356.6 1457.3L701.5 1459.7M358.9 1485.0L703.7 1487.4M361.2 1512.7L705.9 1515.1M363.4 1540.3L708.1 1542.8M365.7 1568.0L710.2 1570.4M368.0 1595.7L712.4 1598.1M370.3 1623.4L714.6 1625.8M372.5 1651.1L716.8 1653.5M374.8 1678.7L719.0 1681.2M377.1 1706.4L721.2 1708.8" stroke="rgba(160,164,184,0.62)" stroke-width="5" fill="none"/>
<polygon points="723.1,1404.4 1069.8,1406.8 1095.8,1739.0 749.4,1736.5" fill="#1c1c31"/>
<path d="M780.9 1404.8L807.1 1736.9M838.7 1405.2L864.8 1737.3M896.5 1405.6L922.6 1737.8M954.2 1406.0L980.3 1738.2M1012.0 1406.4L1038.1 1738.6M725.3 1432.0L1072.0 1434.5M727.5 1459.7L1074.1 1462.2M729.7 1487.4L1076.3 1489.8M731.9 1515.1L1078.5 1517.5M734.1 1542.8L1080.6 1545.2M736.2 1570.4L1082.8 1572.9M738.4 1598.1L1085.0 1600.6M740.6 1625.8L1087.1 1628.2M742.8 1653.5L1089.3 1655.9M745.0 1681.2L1091.5 1683.6M747.2 1708.8L1093.6 1711.3" stroke="rgba(160,164,184,0.62)" stroke-width="5" fill="none"/>
<polygon points="1095.8,1406.8 1441.2,1409.2 1466.3,1741.4 1121.8,1739.0" fill="#1c1c31"/>
<path d="M1153.4 1407.2L1179.2 1739.4M1210.9 1407.6L1236.6 1739.8M1268.5 1408.0L1294.1 1740.2M1326.1 1408.4L1351.5 1740.6M1383.6 1408.8L1408.9 1741.0M1098.0 1434.5L1443.3 1436.9M1100.1 1462.2L1445.4 1464.6M1102.3 1489.8L1447.5 1492.3M1104.5 1517.5L1449.6 1520.0M1106.6 1545.2L1451.6 1547.6M1108.8 1572.9L1453.7 1575.3M1111.0 1600.6L1455.8 1603.0M1113.1 1628.2L1457.9 1630.7M1115.3 1655.9L1460.0 1658.4M1117.5 1683.6L1462.1 1686.0M1119.6 1711.3L1464.2 1713.7" stroke="rgba(160,164,184,0.62)" stroke-width="5" fill="none"/>
<polygon points="1467.2,1409.2 1807.9,1411.6 1830.0,1743.8 1492.3,1741.4" fill="#1c1c31"/>
<path d="M1524.0 1409.6L1548.6 1741.8M1580.8 1410.0L1604.9 1742.2M1637.6 1410.4L1661.2 1742.6M1694.3 1410.8L1717.4 1743.0M1751.1 1411.2L1773.7 1743.4M1469.3 1436.9L1809.8 1439.3M1471.4 1464.6L1811.6 1467.0M1473.5 1492.3L1813.4 1494.7M1475.6 1520.0L1815.3 1522.3M1477.6 1547.6L1817.1 1550.0M1479.7 1575.3L1819.0 1577.7M1481.8 1603.0L1820.8 1605.4M1483.9 1630.7L1822.7 1633.1M1486.0 1658.4L1824.5 1660.7M1488.1 1686.0L1826.3 1688.4M1490.2 1713.7L1828.2 1716.1" stroke="rgba(160,164,184,0.62)" stroke-width="5" fill="none"/>
<polygon points="1833.9,1411.6 2177.4,1414.1 2197.4,1746.2 1856.0,1743.8" fill="#1c1c31"/>
<path d="M1891.2 1412.0L1912.9 1744.2M1948.4 1412.4L1969.8 1744.6M2005.7 1412.8L2026.7 1745.0M2062.9 1413.2L2083.6 1745.4M2120.2 1413.7L2140.5 1745.8M1835.8 1439.3L2179.1 1441.7M1837.6 1467.0L2180.8 1469.4M1839.4 1494.7L2182.4 1497.1M1841.3 1522.3L2184.1 1524.8M1843.1 1550.0L2185.7 1552.4M1845.0 1577.7L2187.4 1580.1M1846.8 1605.4L2189.1 1607.8M1848.7 1633.1L2190.7 1635.5M1850.5 1660.7L2192.4 1663.2M1852.3 1688.4L2194.0 1690.8M1854.2 1716.1L2195.7 1718.5" stroke="rgba(160,164,184,0.62)" stroke-width="5" fill="none"/>
<polygon points="2203.4,1414.1 2545.9,1416.5 2564.1,1748.6 2223.4,1746.2" fill="#1c1c31"/>
<path d="M2260.5 1414.5L2280.2 1746.6M2317.6 1414.9L2337.0 1747.0M2374.7 1415.3L2393.8 1747.4M2431.8 1415.7L2450.5 1747.8M2488.8 1416.1L2507.3 1748.2M2205.1 1441.7L2547.4 1444.1M2206.8 1469.4L2549.0 1471.8M2208.4 1497.1L2550.5 1499.5M2210.1 1524.8L2552.0 1527.2M2211.7 1552.4L2553.5 1554.9M2213.4 1580.1L2555.0 1582.5M2215.1 1607.8L2556.5 1610.2M2216.7 1635.5L2558.1 1637.9M2218.4 1663.2L2559.6 1665.6M2220.0 1690.8L2561.1 1693.2M2221.7 1718.5L2562.6 1720.9" stroke="rgba(160,164,184,0.62)" stroke-width="5" fill="none"/>
<polygon points="2571.9,1416.5 2915.7,1418.9 2932.4,1751.0 2590.1,1748.6" fill="#1c1c31"/>
<path d="M2629.2 1416.9L2647.2 1749.0M2686.5 1417.3L2704.2 1749.4M2743.8 1417.7L2761.3 1749.8M2801.1 1418.1L2818.3 1750.2M2858.4 1418.5L2875.4 1750.6M2573.4 1444.1L2917.1 1446.6M2575.0 1471.8L2918.5 1474.2M2576.5 1499.5L2919.9 1501.9M2578.0 1527.2L2921.3 1529.6M2579.5 1554.9L2922.7 1557.3M2581.0 1582.5L2924.1 1584.9M2582.5 1610.2L2925.5 1612.6M2584.1 1637.9L2926.9 1640.3M2585.6 1665.6L2928.3 1668.0M2587.1 1693.2L2929.6 1695.6M2588.6 1720.9L2931.0 1723.3" stroke="rgba(160,164,184,0.62)" stroke-width="5" fill="none"/>
<polygon points="11.0,1735.7 353.7,1738.1 380.3,2063.2 39.1,2061.3" fill="#1c1c31"/>
<path d="M68.1 1736.1L96.0 2061.6M125.2 1736.5L152.8 2061.9M182.3 1736.9L209.7 2062.3M239.4 1737.3L266.6 2062.6M296.5 1737.7L323.5 2062.9M13.3 1762.8L355.9 1765.2M15.7 1790.0L358.1 1792.3M18.0 1817.1L360.3 1819.4M20.3 1844.2L362.5 1846.5M22.7 1871.4L364.8 1873.6M25.0 1898.5L367.0 1900.7M27.4 1925.6L369.2 1927.8M29.7 1952.8L371.4 1954.9M32.1 1979.9L373.7 1981.9M34.4 2007.0L375.9 2009.0M36.7 2034.2L378.1 2036.1" stroke="rgba(160,164,184,0.62)" stroke-width="5" fill="none"/>
<polygon points="379.7,1738.1 723.7,1740.5 749.3,2065.2 406.3,2063.2" fill="#1c1c31"/>
<path d="M437.0 1738.5L463.5 2063.5M494.3 1738.9L520.7 2063.9M551.7 1739.3L577.8 2064.2M609.0 1739.7L635.0 2064.5M666.3 1740.1L692.2 2064.8M381.9 1765.2L725.8 1767.6M384.1 1792.3L728.0 1794.6M386.3 1819.4L730.1 1821.7M388.5 1846.5L732.2 1848.7M390.8 1873.6L734.4 1875.8M393.0 1900.7L736.5 1902.8M395.2 1927.8L738.6 1929.9M397.4 1954.9L740.8 1957.0M399.7 1981.9L742.9 1984.0M401.9 2009.0L745.1 2011.1M404.1 2036.1L747.2 2038.1" stroke="rgba(160,164,184,0.62)" stroke-width="5" fill="none"/>
<polygon points="749.7,1740.5 1096.1,1743.0 1121.5,2067.1 775.3,2065.2" fill="#1c1c31"/>
<path d="M807.4 1740.9L833.0 2065.5M865.2 1741.3L890.7 2065.8M922.9 1741.8L948.4 2066.1M980.6 1742.2L1006.1 2066.5M1038.4 1742.6L1063.8 2066.8M751.8 1767.6L1098.2 1770.0M754.0 1794.6L1100.3 1797.0M756.1 1821.7L1102.5 1824.0M758.2 1848.7L1104.6 1851.0M760.4 1875.8L1106.7 1878.0M762.5 1902.8L1108.8 1905.0M764.6 1929.9L1110.9 1932.1M766.8 1957.0L1113.0 1959.1M768.9 1984.0L1115.1 1986.1M771.1 2011.1L1117.3 2013.1M773.2 2038.1L1119.4 2040.1" stroke="rgba(160,164,184,0.62)" stroke-width="5" fill="none"/>
<polygon points="1122.1,1743.0 1466.6,1745.4 1491.1,2069.0 1147.5,2067.1" fill="#1c1c31"/>
<path d="M1179.5 1743.4L1204.8 2067.4M1236.9 1743.8L1262.0 2067.8M1294.4 1744.2L1319.3 2068.1M1351.8 1744.6L1376.5 2068.4M1409.2 1745.0L1433.8 2068.7M1124.2 1770.0L1468.6 1772.4M1126.3 1797.0L1470.7 1799.3M1128.5 1824.0L1472.7 1826.3M1130.6 1851.0L1474.8 1853.3M1132.7 1878.0L1476.8 1880.3M1134.8 1905.0L1478.8 1907.2M1136.9 1932.1L1480.9 1934.2M1139.0 1959.1L1482.9 1961.2M1141.1 1986.1L1485.0 1988.1M1143.3 2013.1L1487.0 2015.1M1145.4 2040.1L1489.0 2042.1" stroke="rgba(160,164,184,0.62)" stroke-width="5" fill="none"/>
<polygon points="1492.6,1745.4 1830.3,1747.8 1851.8,2070.9 1517.1,2069.0" fill="#1c1c31"/>
<path d="M1548.9 1745.8L1572.9 2069.4M1605.2 1746.2L1628.6 2069.7M1661.4 1746.6L1684.4 2070.0M1717.7 1747.0L1740.2 2070.3M1774.0 1747.4L1796.0 2070.6M1494.6 1772.4L1832.1 1774.7M1496.7 1799.3L1833.9 1801.6M1498.7 1826.3L1835.7 1828.6M1500.8 1853.3L1837.5 1855.5M1502.8 1880.3L1839.3 1882.4M1504.8 1907.2L1841.0 1909.4M1506.9 1934.2L1842.8 1936.3M1508.9 1961.2L1844.6 1963.2M1511.0 1988.1L1846.4 1990.1M1513.0 2015.1L1848.2 2017.1M1515.0 2042.1L1850.0 2044.0" stroke="rgba(160,164,184,0.62)" stroke-width="5" fill="none"/>
<polygon points="1856.3,1747.8 2197.6,1750.2 2217.0,2072.9 1877.8,2070.9" fill="#1c1c31"/>
<path d="M1913.2 1748.2L1934.3 2071.3M1970.1 1748.6L1990.9 2071.6M2027.0 1749.0L2047.4 2071.9M2083.8 1749.4L2103.9 2072.2M2140.7 1749.8L2160.4 2072.5M1858.1 1774.7L2199.2 1777.1M1859.9 1801.6L2200.8 1804.0M1861.7 1828.6L2202.5 1830.9M1863.5 1855.5L2204.1 1857.7M1865.3 1882.4L2205.7 1884.6M1867.0 1909.4L2207.3 1911.5M1868.8 1936.3L2208.9 1938.4M1870.6 1963.2L2210.5 1965.3M1872.4 1990.1L2212.1 1992.2M1874.2 2017.1L2213.7 2019.1M1876.0 2044.0L2215.4 2046.0" stroke="rgba(160,164,184,0.62)" stroke-width="5" fill="none"/>
<polygon points="2223.6,1750.2 2564.4,1752.6 2582.0,2074.8 2243.0,2072.9" fill="#1c1c31"/>
<path d="M2280.4 1750.6L2299.5 2073.2M2337.2 1751.0L2356.0 2073.5M2394.0 1751.4L2412.5 2073.8M2450.8 1751.8L2469.0 2074.1M2507.6 1752.2L2525.5 2074.4M2225.2 1777.1L2565.8 1779.4M2226.8 1804.0L2567.3 1806.3M2228.5 1830.9L2568.8 1833.1M2230.1 1857.7L2570.2 1860.0M2231.7 1884.6L2571.7 1886.8M2233.3 1911.5L2573.2 1913.7M2234.9 1938.4L2574.7 1940.5M2236.5 1965.3L2576.1 1967.4M2238.1 1992.2L2577.6 1994.2M2239.7 2019.1L2579.1 2021.1M2241.4 2046.0L2580.5 2047.9" stroke="rgba(160,164,184,0.62)" stroke-width="5" fill="none"/>
<polygon points="2590.4,1752.6 2932.6,1755.0 2948.8,2076.7 2608.0,2074.8" fill="#1c1c31"/>
<path d="M2647.4 1753.0L2664.8 2075.1M2704.4 1753.4L2721.6 2075.4M2761.5 1753.8L2778.4 2075.7M2818.5 1754.2L2835.2 2076.0M2875.6 1754.6L2892.0 2076.4M2591.8 1779.4L2934.0 1781.8M2593.3 1806.3L2935.3 1808.6M2594.8 1833.1L2936.7 1835.4M2596.2 1860.0L2938.0 1862.2M2597.7 1886.8L2939.4 1889.0M2599.2 1913.7L2940.7 1915.8M2600.7 1940.5L2942.1 1942.7M2602.1 1967.4L2943.4 1969.5M2603.6 1994.2L2944.8 1996.3M2605.1 2021.1L2946.1 2023.1M2606.5 2047.9L2947.5 2049.9" stroke="rgba(160,164,184,0.62)" stroke-width="5" fill="none"/>
<line x1="350" y1="1039" x2="2640" y2="1063" stroke="#d2d5dd" stroke-width="4.5"/>
<line x1="350" y1="1736" x2="2640" y2="1751" stroke="#d2d5dd" stroke-width="4.5"/>
<path d="M935 2093 L977 2093 L971 2128 L949 2136 L943 2118Z" fill="#3e342e" opacity="0.85"/>
<path d="M2380 2105 L2422 2105 L2416 2140 L2394 2148 L2388 2130Z" fill="#3e342e" opacity="0.85"/>
<polygon points="357.6,1401.5 700.0,1400.0 750.6,2063.0 406.5,2063.0" fill="rgba(235,0,28,0.40)" stroke="#ff1010" stroke-width="5" stroke-linejoin="miter"/>
<polygon points="728.3,1409.0 1075.6,1409.0 1123.5,2064.8 775.0,2064.8" fill="rgba(235,0,28,0.40)" stroke="#ff1010" stroke-width="5" stroke-linejoin="miter"/>
<polygon points="1100.6,1410.5 1448.0,1410.5 1495.8,2071.7 1147.4,2071.7" fill="rgba(235,0,28,0.40)" stroke="#ff1010" stroke-width="5" stroke-linejoin="miter"/>
<rect x="2516" y="1429" width="116" height="51" fill="rgba(255,0,10,0.40)" stroke="#ff1414" stroke-width="4"/>
<filter id="bl" x="-50%" y="-50%" width="200%" height="200%"><feGaussianBlur stdDeviation="6"/></filter>
<g fill="#e8959f" opacity="0.6" filter="url(#bl)">
<ellipse cx="455" cy="1700" rx="14" ry="22"/>
<ellipse cx="480" cy="1660" rx="16" ry="18"/>
<ellipse cx="510" cy="1630" rx="20" ry="14"/>
<ellipse cx="545" cy="1625" rx="16" ry="12"/>
<ellipse cx="585" cy="1640" rx="16" ry="12"/>
<ellipse cx="615" cy="1660" rx="12" ry="14"/>
<ellipse cx="640" cy="1690" rx="12" ry="12"/>
<ellipse cx="660" cy="1710" rx="9" ry="9"/>
<ellipse cx="445" cy="1800" rx="8" ry="6"/>
<ellipse cx="470" cy="1860" rx="10" ry="6"/>
<ellipse cx="520" cy="1890" rx="14" ry="10"/>
<ellipse cx="560" cy="1850" rx="12" ry="8"/>
<ellipse cx="610" cy="1900" rx="16" ry="10"/>
<ellipse cx="650" cy="1830" rx="10" ry="8"/>
<ellipse cx="470" cy="1950" rx="10" ry="6"/>
<ellipse cx="560" cy="1990" rx="12" ry="7"/>
<ellipse cx="600" cy="1950" rx="10" ry="8"/>
<ellipse cx="500" cy="2020" rx="8" ry="6"/>
<ellipse cx="680" cy="1880" rx="8" ry="10"/>
<ellipse cx="430" cy="1760" rx="7" ry="10"/>
<ellipse cx="540" cy="1760" rx="10" ry="8"/>
<ellipse cx="640" cy="1760" rx="10" ry="7"/>
<ellipse cx="520" cy="1930" rx="10" ry="6"/>
<ellipse cx="660" cy="1960" rx="9" ry="7"/>
<ellipse cx="700" cy="2000" rx="8" ry="8"/>
<ellipse cx="1090" cy="2030" rx="22" ry="30"/>
<ellipse cx="1105" cy="1990" rx="12" ry="30"/>
<ellipse cx="1070" cy="2050" rx="20" ry="12"/>
<ellipse cx="1415" cy="1490" rx="10" ry="26"/>
<ellipse cx="1420" cy="1550" rx="14" ry="24"/>
<ellipse cx="1415" cy="1610" rx="16" ry="30"/>
<ellipse cx="1405" cy="1650" rx="12" ry="14"/>
<ellipse cx="1430" cy="1800" rx="8" ry="30"/>
<ellipse cx="1440" cy="1900" rx="8" ry="40"/>
<ellipse cx="1445" cy="1990" rx="8" ry="24"/>
<ellipse cx="1390" cy="1500" rx="6" ry="10"/>
</g>
</svg></div>
<div class="t" style="left:404.88px;top:2097px;font-size:45.75px;color:#ff0d0d;font-weight:400;transform:scaleX(1.1086);">Dirt</div>
<div class="t" style="left:771.82px;top:2097px;font-size:45.75px;color:#ff0d0d;font-weight:400;transform:scaleX(1.1249);">Dirt</div>
<div class="t" style="left:1146.88px;top:2099px;font-size:45.75px;color:#ff0d0d;font-weight:400;transform:scaleX(1.1086);">Dirt</div>
<div class="t" style="left:2512.80px;top:1494px;font-size:35.75px;color:#ff0d0d;font-weight:400;transform:scaleX(1.1286);">Dirt</div>
<div class="a" style="left:351px;top:2680px;width:2289px;height:19px;border-radius:10px;background:#d3d8fb"></div>
<div class="a" style="left:351px;top:2680px;width:757.5px;height:19px;border-radius:10px;background:#6b7cf1"></div>
</body></html>
